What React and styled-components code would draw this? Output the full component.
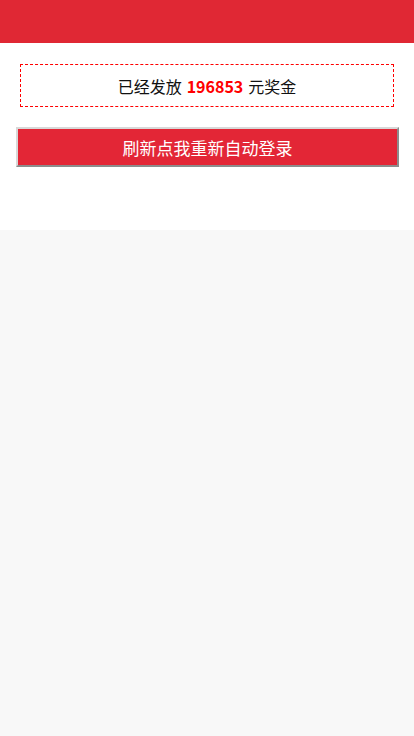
import React from "react";
import styled, { createGlobalStyle } from "styled-components";

const GlobalStyle = createGlobalStyle`
  html, body {
    margin: 0;
    padding: 0;
    background-color: #f8f8f8;
    font-family: "Noto Sans CJK SC", "Noto Sans", sans-serif;
  }
`;

const Page = styled.div`
  background-color: #fff;
  height: 230px;
`;

const Header = styled.div`
  height: 43px;
  background-color: #e02834;
`;

const Notice = styled.div`
  margin: 21px 20px 0;
  height: 41px;
  border: 1px dashed #f00;
  display: flex;
  align-items: center;
  justify-content: center;
  font-size: 16px;
  color: #111;
`;

const Amount = styled.b`
  color: #f00;
  margin: 0 5px;
`;

const RefreshButton = styled.button`
  display: block;
  width: 383px;
  height: 40px;
  margin: 20px 0 0 16px;
  border: 2px solid;
  border-color: #d8d8d8 #8c8c8c #8c8c8c #d8d8d8;
  background-color: #e32636;
  color: #fff;
  font-family: inherit;
  font-size: 17px;
  cursor: pointer;
`;

export default function App() {
  return (
    <>
      <GlobalStyle />
      <Page>
        <Header />
        <Notice>
          已经发放<Amount>196853</Amount>元奖金
        </Notice>
        <RefreshButton onClick={() => window.location.reload()}>
          刷新点我重新自动登录
        </RefreshButton>
      </Page>
    </>
  );
}
